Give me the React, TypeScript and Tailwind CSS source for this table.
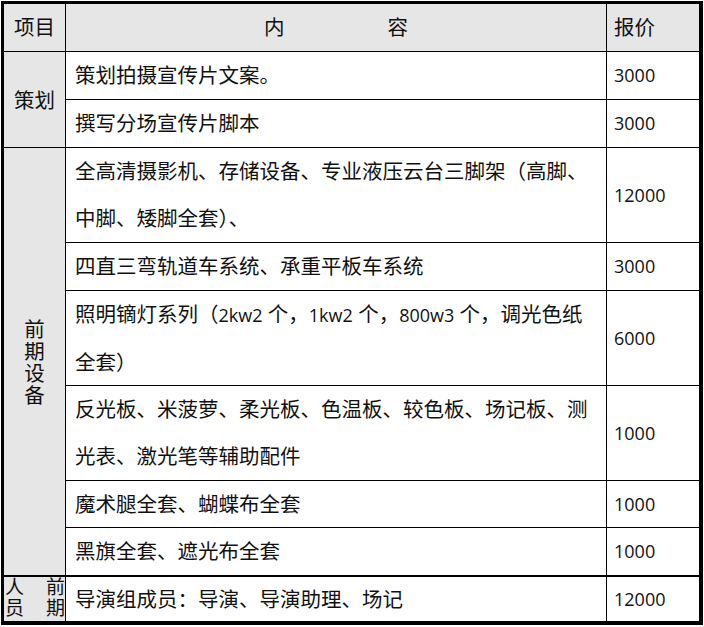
import { Fragment } from 'react'

const cjk = "font-['Open_Sans','Noto_Sans_CJK_SC',sans-serif]"

const Num = ({ children }: { children: string }) => <span className="text-[18px]">{children}</span>

export default function App() {
  const groups = [
    {
      name: '策划',
      span: 'row-span-2',
      items: [
        { lines: ['策划拍摄宣传片文案。'], price: '3000' },
        { lines: ['撰写分场宣传片脚本'], price: '3000' },
      ],
    },
    {
      name: '前期设备',
      span: 'row-span-6',
      items: [
        { lines: ['全高清摄影机、存储设备、专业液压云台三脚架（高脚、', '中脚、矮脚全套）、'], price: '12000' },
        { lines: ['四直三弯轨道车系统、承重平板车系统'], price: '3000' },
        {
          lines: [
            <>
              照明镝灯系列（<Num>2kw2</Num> 个，<Num>1kw2</Num> 个，<Num>800w3</Num> 个，调光色纸
            </>,
            '全套）',
          ],
          price: '6000',
        },
        { lines: ['反光板、米菠萝、柔光板、色温板、较色板、场记板、测', '光表、激光笔等辅助配件'], price: '1000' },
        { lines: ['魔术腿全套、蝴蝶布全套'], price: '1000' },
        { lines: ['黑旗全套、遮光布全套'], price: '1000' },
      ],
    },
  ]

  return (
    <div className="bg-white w-[704px] h-[627px] pt-px pl-px">
      <div
        className={`${cjk} text-[20.5px] text-[#111] w-[702px] border-black border-t-[3px] border-l-[3px] border-r-[4px] border-b-[4px] bg-black grid grid-cols-[61px_540px_92px] grid-rows-[47px_47px_47px_94px_47px_94px_94px_46px_47px_45px] gap-px`}
      >
        {/* header */}
        <div className="bg-[#e6e6e6] flex items-center justify-center">项目</div>
        <div className="bg-[#e6e6e6] flex items-center justify-center gap-[103px]">
          <span>内</span>
          <span>容</span>
        </div>
        <div className="bg-[#e6e6e6] flex items-center pl-[7px]">报价</div>

        {groups.map((g) => (
          <Fragment key={g.name}>
            <div className={`${g.span} bg-[#e6e6e6] flex flex-col items-center justify-center leading-[22px]`}>
              {g.name.length > 2 ? g.name.split('').map((c) => <span key={c}>{c}</span>) : g.name}
            </div>
            {g.items.map((item, i) => (
              <Fragment key={i}>
                <div className="bg-white flex flex-col justify-center pl-[9px] whitespace-nowrap">
                  {item.lines.map((l, j) => (
                    <div key={j} className="leading-[47px]">
                      {l}
                    </div>
                  ))}
                </div>
                <div className="bg-white flex items-center pl-[7px] text-[18px]">{item.price}</div>
              </Fragment>
            ))}
          </Fragment>
        ))}

        {/* last row */}
        <div className="bg-[#e6e6e6] border-t border-black flex justify-between text-[19px] leading-[21px] pl-[1px] overflow-hidden">
          <div className="flex flex-col">
            <span>人</span>
            <span>员</span>
          </div>
          <div className="flex flex-col">
            <span>前</span>
            <span>期</span>
          </div>
        </div>
        <div className="bg-white border-t border-black flex items-center pl-[9px]">导演组成员：导演、导演助理、场记</div>
        <div className="bg-white border-t border-black flex items-center pl-[7px] text-[18px]">12000</div>
      </div>
    </div>
  )
}
